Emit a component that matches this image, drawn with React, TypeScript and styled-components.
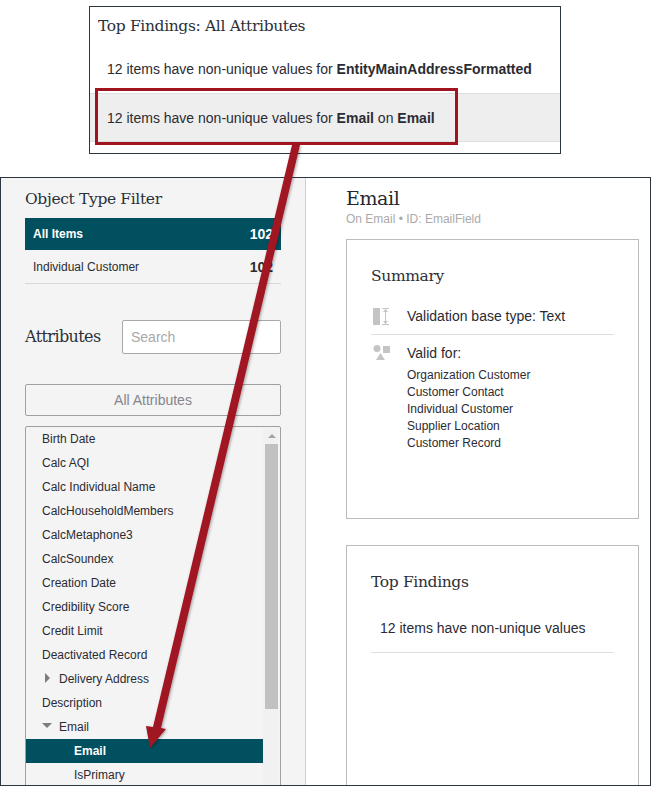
import React from "react";
import styled, { createGlobalStyle } from "styled-components";

const GlobalStyle = createGlobalStyle`
  html, body {
    margin: 0;
    padding: 0;
    background: #fff;
  }
  body {
    font-family: "Liberation Sans", Arial, sans-serif;
    color: #2b2b33;
  }
`;

const serif = `"DejaVu Serif", "Liberation Serif", serif`;

const Page = styled.div`
  position: relative;
  width: 653px;
  height: 786px;
  overflow: hidden;
  padding-top: 6px;
  box-sizing: border-box;
`;

const TopCard = styled.section`
  position: relative;
  box-sizing: border-box;
  width: 472px;
  height: 148px;
  margin-left: 89px;
  border: 1px solid #2d3640;
  padding-top: 9px;
`;

const TopTitle = styled.h2`
  margin: 0 0 0 8px;
  font: 400 15.5px/20px ${serif};
  letter-spacing: -0.35px;
  color: #2b3038;
`;

const FindingRow = styled.div<{ selected?: boolean }>`
  box-sizing: border-box;
  height: 49px;
  padding-left: 17px;
  display: flex;
  align-items: center;
  white-space: pre;
  font-size: 14px;
  background: ${({ selected }) => (selected ? "#eeeeee" : "transparent")};
  border-top: ${({ selected }) => (selected ? "1px solid #dedede" : "none")};
  border-bottom: ${({ selected }) => (selected ? "1px solid #dedede" : "none")};

  b {
    color: #2b2b33;
  }
`;

const FindingList = styled.div`
  margin-top: 8px;
`;

const Callout = styled.div`
  position: absolute;
  left: 5px;
  top: 81px;
  width: 363px;
  height: 57px;
  box-sizing: border-box;
  border: 3px solid #a01420;
`;

const Window = styled.div`
  box-sizing: border-box;
  display: flex;
  width: 651px;
  height: 609px;
  margin-top: 23px;
  border: 1px solid #2d3640;
  overflow: hidden;
`;

const SidePanel = styled.aside`
  box-sizing: border-box;
  flex: 0 0 305px;
  background: #f4f4f4;
  border-right: 1px solid #d0d0d0;
  padding: 11px 24px 0 24px;
  display: flex;
  flex-direction: column;
`;

const PanelTitle = styled.h3`
  margin: 0;
  font: 400 15.5px/20px ${serif};
  letter-spacing: -0.35px;
  color: #2b3038;
`;

const FilterList = styled.div`
  margin-top: 9px;
`;

const FilterRow = styled.div<{ active?: boolean }>`
  box-sizing: border-box;
  height: ${({ active }) => (active ? "32px" : "34px")};
  padding: 0 8px;
  display: flex;
  align-items: center;
  justify-content: space-between;
  font-size: 12px;
  font-weight: ${({ active }) => (active ? 700 : 400)};
  color: ${({ active }) => (active ? "#fff" : "#2b2b33")};
  background: ${({ active }) => (active ? "#00505f" : "transparent")};
  border-bottom: ${({ active }) => (active ? "none" : "1px solid #d8d8d8")};
`;

const Count = styled.span`
  font-size: 14px;
  font-weight: 700;
`;

const AttributesHeader = styled.div`
  display: flex;
  align-items: center;
  justify-content: space-between;
  margin-top: 36px;
`;

const AttributesTitle = styled.h3`
  margin: 0;
  font: 400 16px/24px ${serif};
  letter-spacing: -0.6px;
  color: #2b3038;
`;

const SearchBox = styled.input`
  box-sizing: border-box;
  width: 159px;
  height: 34px;
  padding: 0 8px;
  border: 1px solid #a8a8a8;
  border-radius: 2px;
  background: #fff;
  font: 14px "Liberation Sans", Arial, sans-serif;

  &::placeholder {
    color: #a8a8a8;
    opacity: 1;
  }
`;

const AllButton = styled.button`
  box-sizing: border-box;
  flex: none;
  width: 256px;
  height: 32px;
  margin-top: 30px;
  border: 1px solid #a0a0a0;
  border-radius: 2px;
  background: #f4f4f4;
  font: 14px "Liberation Sans", Arial, sans-serif;
  color: #85858b;
`;

const TreeBox = styled.div`
  box-sizing: border-box;
  flex: none;
  width: 256px;
  height: 360px;
  margin-top: 10px;
  border: 1px solid #a0a0a0;
  border-radius: 2px 2px 0 0;
  display: flex;
`;

const TreeList = styled.div`
  flex: 0 0 237px;
`;

const TreeRow = styled.div<{ level?: number; selected?: boolean }>`
  box-sizing: border-box;
  height: 24px;
  display: flex;
  align-items: center;
  padding-left: ${({ level }) => 16 + (level ?? 0) * 32}px;
  font-size: 12px;
  font-weight: ${({ selected }) => (selected ? 700 : 400)};
  color: ${({ selected }) => (selected ? "#fff" : "#2b2b33")};
  background: ${({ selected }) => (selected ? "#00505f" : "transparent")};
`;

const Caret = styled.span<{ open?: boolean }>`
  width: 0;
  height: 0;
  margin-right: ${({ open }) => (open ? "7px" : "9px")};
  margin-bottom: 3px;
  ${({ open }) =>
    open
      ? `border-left: 5px solid transparent;
         border-right: 5px solid transparent;
         border-top: 5px solid #7c7c7c;`
      : `margin-left: 3px;
         border-top: 5px solid transparent;
         border-bottom: 5px solid transparent;
         border-left: 5px solid #7c7c7c;`}
`;

const ScrollTrack = styled.div`
  flex: 0 0 15px;
  background: #f1f1f1;
  display: flex;
  flex-direction: column;
`;

const ScrollUp = styled.div`
  height: 17px;
  padding-left: 2px;
  display: flex;
  align-items: center;
  justify-content: center;

  &::before {
    content: "";
    border-left: 4px solid transparent;
    border-right: 4px solid transparent;
    border-bottom: 4px solid #a3a3a3;
  }
`;

const ScrollThumb = styled.div`
  height: 265px;
  margin-left: 2px;
  background: #c1c1c1;
`;

const Content = styled.main`
  flex: 1;
  padding: 8px 11px 0 40px;
  display: flex;
  flex-direction: column;
`;

const ItemTitle = styled.h1`
  margin: 0;
  font: 400 19px/24px ${serif};
  letter-spacing: -0.4px;
  color: #23272e;
`;

const ItemMeta = styled.div`
  font-size: 12px;
  line-height: 14px;
  margin-top: 2px;
  color: #aaaaaa;
`;

const Card = styled.section<{ grow?: boolean }>`
  box-sizing: border-box;
  flex: none;
  width: 293px;
  height: ${({ grow }) => (grow ? "260px" : "280px")};
  margin-top: ${({ grow }) => (grow ? "26px" : "13px")};
  padding: 25px 24px 0;
  border: 1px solid #bcbcbc;
  ${({ grow }) => grow && "border-bottom: none;"}
`;

const CardTitle = styled.h3`
  margin: 0;
  font: 400 15.5px/22px ${serif};
  letter-spacing: -0.35px;
  color: #2b3038;
`;

const InfoRow = styled.div<{ ruled?: boolean }>`
  display: flex;
  align-items: flex-start;
  margin-top: ${({ ruled }) => (ruled ? "21px" : "10px")};
  padding-bottom: ${({ ruled }) => (ruled ? "8px" : "0")};
  border-bottom: ${({ ruled }) => (ruled ? "1px solid #dfdfdf" : "none")};
`;

const InfoIcon = styled.svg`
  flex: 0 0 18px;
  width: 18px;
  height: 18px;
  margin: 0 16px 0 2px;
`;

const InfoLabel = styled.div`
  font-size: 14px;
  line-height: 17px;
`;

const ValidList = styled.ul`
  list-style: none;
  margin: 5px 0 0;
  padding: 0;
  font-size: 12px;
  line-height: 17px;
`;

const FindingSummary = styled.div`
  margin-top: 27px;
  padding: 0 0 15px 9px;
  font-size: 14px;
  line-height: 17px;
  border-bottom: 1px solid #dfdfdf;
`;

const ArrowLayer = styled.svg`
  position: absolute;
  left: 0;
  top: 0;
  pointer-events: none;
`;

const attributes: { name: string; caret?: "open" | "closed"; level?: number; selected?: boolean }[] = [
  { name: "Birth Date" },
  { name: "Calc AQI" },
  { name: "Calc Individual Name" },
  { name: "CalcHouseholdMembers" },
  { name: "CalcMetaphone3" },
  { name: "CalcSoundex" },
  { name: "Creation Date" },
  { name: "Credibility Score" },
  { name: "Credit Limit" },
  { name: "Deactivated Record" },
  { name: "Delivery Address", caret: "closed" },
  { name: "Description" },
  { name: "Email", caret: "open" },
  { name: "Email", level: 1, selected: true },
  { name: "IsPrimary", level: 1 },
];

const validFor = [
  "Organization Customer",
  "Customer Contact",
  "Individual Customer",
  "Supplier Location",
  "Customer Record",
];

const App: React.FC = () => (
  <Page>
    <GlobalStyle />
    <TopCard>
      <TopTitle>Top Findings: All Attributes</TopTitle>
      <FindingList>
        <FindingRow>
          12 items have non-unique values for <b>EntityMainAddressFormatted</b>
        </FindingRow>
        <FindingRow selected>
          12 items have non-unique values for <b>Email</b> on <b>Email</b>
        </FindingRow>
      </FindingList>
      <Callout />
    </TopCard>
    <Window>
      <SidePanel>
        <PanelTitle>Object Type Filter</PanelTitle>
        <FilterList>
          <FilterRow active>
            All Items <Count>102</Count>
          </FilterRow>
          <FilterRow>
            Individual Customer <Count>102</Count>
          </FilterRow>
        </FilterList>
        <AttributesHeader>
          <AttributesTitle>Attributes</AttributesTitle>
          <SearchBox placeholder="Search" />
        </AttributesHeader>
        <AllButton>All Attributes</AllButton>
        <TreeBox>
          <TreeList>
            {attributes.map((attr, index) => (
              <TreeRow key={index} level={attr.level} selected={attr.selected}>
                {attr.caret && <Caret open={attr.caret === "open"} />}
                {attr.name}
              </TreeRow>
            ))}
          </TreeList>
          <ScrollTrack>
            <ScrollUp />
            <ScrollThumb />
          </ScrollTrack>
        </TreeBox>
      </SidePanel>
      <Content>
        <ItemTitle>Email</ItemTitle>
        <ItemMeta>On Email • ID: EmailField</ItemMeta>
        <Card>
          <CardTitle>Summary</CardTitle>
          <InfoRow ruled>
            <InfoIcon viewBox="0 0 18 18">
              <rect x="0" y="0" width="7" height="17" fill="#c4c4c4" />
              <path d="M9 0.5h7M9 16.5h7M12.5 1v15" stroke="#c4c4c4" strokeWidth="1" fill="none" />
              <path d="M10 4l2.5-3 2.5 3zM10 13l2.5 3 2.5-3z" fill="#c4c4c4" />
            </InfoIcon>
            <InfoLabel>Validation base type: Text</InfoLabel>
          </InfoRow>
          <InfoRow>
            <InfoIcon viewBox="0 0 18 18">
              <circle cx="4" cy="3.5" r="3.5" fill="#c4c4c4" />
              <rect x="10" y="1" width="7" height="7" fill="#c4c4c4" />
              <path d="M3 15l4.5-7 4.5 7z" fill="#c4c4c4" />
            </InfoIcon>
            <div>
              <InfoLabel>Valid for:</InfoLabel>
              <ValidList>
                {validFor.map((name) => (
                  <li key={name}>{name}</li>
                ))}
              </ValidList>
            </div>
          </InfoRow>
        </Card>
        <Card grow>
          <CardTitle>Top Findings</CardTitle>
          <FindingSummary>12 items have non-unique values</FindingSummary>
        </Card>
      </Content>
    </Window>
    <ArrowLayer width="653" height="786" viewBox="0 0 653 786">
      <defs>
        <filter id="arrowShadow" x="-20%" y="-5%" width="140%" height="110%">
          <feDropShadow dx="1" dy="1" stdDeviation="1.5" floodColor="#000" floodOpacity="0.35" />
        </filter>
      </defs>
      <path
        d="M292 145L300 145L161 728L166 729L150 748L146 726L153 727Z"
        fill="#a01420"
        filter="url(#arrowShadow)"
      />
    </ArrowLayer>
  </Page>
);

export default App;
